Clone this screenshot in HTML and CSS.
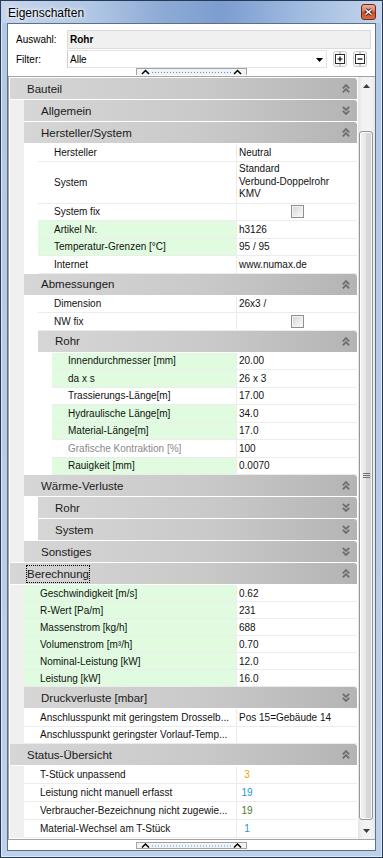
FILE: index.html
```html
<!DOCTYPE html>
<html lang="de">
<head>
<meta charset="utf-8">
<title>Eigenschaften</title>
<link rel="stylesheet" href="styles.css">
</head>
<body>
<div class="window">
  <div class="titlebar">
    <span class="title">Eigenschaften</span>
    <svg class="close" width="15" height="16" viewBox="0 0 15 16">
      <defs>
        <linearGradient id="cg" x1="0" y1="0" x2="0" y2="1">
          <stop offset="0" stop-color="#eeb3a3"/>
          <stop offset="0.45" stop-color="#dc7a60"/>
          <stop offset="0.5" stop-color="#c8462b"/>
          <stop offset="1" stop-color="#d9714d"/>
        </linearGradient>
      </defs>
      <rect x="0.5" y="0.5" width="14" height="15" rx="2.5" fill="url(#cg)" stroke="#6e2b1c"/>
      <path d="M4.5 5.5 L10.5 10.5 M10.5 5.5 L4.5 10.5" stroke="#43201a" stroke-width="3.4"/>
      <path d="M4.5 5.5 L10.5 10.5 M10.5 5.5 L4.5 10.5" stroke="#fff" stroke-width="1.6"/>
    </svg>
  </div>
  <div class="content">
    <div class="form">
      <span class="flabel">Auswahl:</span>
      <div class="fld">Rohr</div>
      <span class="flabel">Filter:</span>
      <div class="filter">
        <div class="combo"><span>Alle</span>
          <svg width="7" height="4" viewBox="0 0 7 4"><path d="M0 0h7L3.5 4z" fill="#000"/></svg>
        </div>
        <svg class="btn" width="14" height="16" viewBox="0 0 14 16">
          <rect x="0.5" y="0.5" width="13" height="15" rx="2" fill="#f6f6f6" stroke="#cdcdcd"/>
          <path d="M7 1v2.5M7 12.5V15" stroke="#8a8a8a"/>
          <rect x="2.5" y="3.5" width="9" height="9" fill="#fff" stroke="#2b2b2b"/>
          <path d="M4.5 8h5M7 5.5v5" stroke="#000" stroke-width="1.2"/>
        </svg>
        <svg class="btn" width="14" height="16" viewBox="0 0 14 16">
          <rect x="0.5" y="0.5" width="13" height="15" rx="2" fill="#f6f6f6" stroke="#cdcdcd"/>
          <path d="M7 1v2.5M7 12.5V15" stroke="#8a8a8a"/>
          <rect x="2.5" y="3.5" width="9" height="9" fill="#fff" stroke="#2b2b2b"/>
          <path d="M4.5 8h5" stroke="#000" stroke-width="1.2"/>
        </svg>
      </div>
    </div>
    <svg class="grip" width="111" height="7" viewBox="0 0 111 7">
      <rect x="0.5" y="0.5" width="110" height="7" fill="#f3f3f3" stroke="#a3a3a3"/>
      <path d="M6 6 L9.5 2.5 L13 6" stroke="#000" stroke-width="1.5" fill="none"/>
      <path d="M98 6 L101.5 2.5 L105 6" stroke="#000" stroke-width="1.5" fill="none"/>
      <line x1="16" y1="4.5" x2="95" y2="4.5" stroke="#3a98ea" stroke-dasharray="1 2"/>
    </svg>

    <div class="pgrid">
      <div class="list">

        <div class="cat">
          <div class="hdr">Bauteil<svg width="8" height="9" viewBox="0 0 8 9"><path d="M0.8 4.3 4 1.1 7.2 4.3M0.8 8.3 4 5.1 7.2 8.3" fill="none" stroke="#6e6e6e" stroke-width="1.8"/></svg></div>
          <div class="kids0">
            <div class="cat">
              <div class="hdr">Allgemein<svg width="8" height="9" viewBox="0 0 8 9"><path d="M0.8 0.8 4 4 7.2 0.8M0.8 4.8 4 8 7.2 4.8" fill="none" stroke="#6e6e6e" stroke-width="1.8"/></svg></div>
            </div>
            <div class="cat">
              <div class="hdr">Hersteller/System<svg width="8" height="9" viewBox="0 0 8 9"><path d="M0.8 4.3 4 1.1 7.2 4.3M0.8 8.3 4 5.1 7.2 8.3" fill="none" stroke="#6e6e6e" stroke-width="1.8"/></svg></div>
              <div class="kids">
                <div class="row"><div class="lab">Hersteller</div><div class="val">Neutral</div></div>
                <div class="row tall"><div class="lab">System</div><div class="val"><span>Standard</span><span>Verbund-Doppelrohr</span><span>KMV</span></div></div>
                <div class="row"><div class="lab">System fix</div><div class="val cbcell"><span class="cb"></span></div></div>
                <div class="row g"><div class="lab">Artikel Nr.</div><div class="val">h3126</div></div>
                <div class="row g"><div class="lab">Temperatur-Grenzen [°C]</div><div class="val">95 / 95</div></div>
                <div class="row"><div class="lab">Internet</div><div class="val">www.numax.de</div></div>
              </div>
            </div>
            <div class="cat">
              <div class="hdr">Abmessungen<svg width="8" height="9" viewBox="0 0 8 9"><path d="M0.8 4.3 4 1.1 7.2 4.3M0.8 8.3 4 5.1 7.2 8.3" fill="none" stroke="#6e6e6e" stroke-width="1.8"/></svg></div>
              <div class="kids">
                <div class="row"><div class="lab">Dimension</div><div class="val">26x3 /</div></div>
                <div class="row"><div class="lab">NW fix</div><div class="val cbcell"><span class="cb"></span></div></div>
                <div class="cat">
                  <div class="hdr">Rohr<svg width="8" height="9" viewBox="0 0 8 9"><path d="M0.8 4.3 4 1.1 7.2 4.3M0.8 8.3 4 5.1 7.2 8.3" fill="none" stroke="#6e6e6e" stroke-width="1.8"/></svg></div>
                  <div class="kids">
                    <div class="row g"><div class="lab">Innendurchmesser [mm]</div><div class="val">20.00</div></div>
                    <div class="row g"><div class="lab">da x s</div><div class="val">26 x 3</div></div>
                    <div class="row"><div class="lab">Trassierungs-Länge[m]</div><div class="val">17.00</div></div>
                    <div class="row g"><div class="lab">Hydraulische Länge[m]</div><div class="val">34.0</div></div>
                    <div class="row g"><div class="lab">Material-Länge[m]</div><div class="val">17.0</div></div>
                    <div class="row dim"><div class="lab">Grafische Kontraktion [%]</div><div class="val">100</div></div>
                    <div class="row g"><div class="lab">Rauigkeit [mm]</div><div class="val">0.0070</div></div>
                  </div>
                </div>
              </div>
            </div>
            <div class="cat">
              <div class="hdr">Wärme-Verluste<svg width="8" height="9" viewBox="0 0 8 9"><path d="M0.8 4.3 4 1.1 7.2 4.3M0.8 8.3 4 5.1 7.2 8.3" fill="none" stroke="#6e6e6e" stroke-width="1.8"/></svg></div>
              <div class="kids">
                <div class="cat">
                  <div class="hdr">Rohr<svg width="8" height="9" viewBox="0 0 8 9"><path d="M0.8 0.8 4 4 7.2 0.8M0.8 4.8 4 8 7.2 4.8" fill="none" stroke="#6e6e6e" stroke-width="1.8"/></svg></div>
                </div>
                <div class="cat">
                  <div class="hdr">System<svg width="8" height="9" viewBox="0 0 8 9"><path d="M0.8 0.8 4 4 7.2 0.8M0.8 4.8 4 8 7.2 4.8" fill="none" stroke="#6e6e6e" stroke-width="1.8"/></svg></div>
                </div>
              </div>
            </div>
            <div class="cat">
              <div class="hdr">Sonstiges<svg width="8" height="9" viewBox="0 0 8 9"><path d="M0.8 0.8 4 4 7.2 0.8M0.8 4.8 4 8 7.2 4.8" fill="none" stroke="#6e6e6e" stroke-width="1.8"/></svg></div>
            </div>
          </div>
        </div>

        <div class="cat">
          <div class="hdr"><span class="focus">Berechnung</span><svg width="8" height="9" viewBox="0 0 8 9"><path d="M0.8 4.3 4 1.1 7.2 4.3M0.8 8.3 4 5.1 7.2 8.3" fill="none" stroke="#6e6e6e" stroke-width="1.8"/></svg></div>
          <div class="kids0">
            <div class="r17">
              <div class="row g"><div class="lab">Geschwindigkeit [m/s]</div><div class="val">0.62</div></div>
              <div class="row g"><div class="lab">R-Wert [Pa/m]</div><div class="val">231</div></div>
              <div class="row g"><div class="lab">Massenstrom [kg/h]</div><div class="val">688</div></div>
              <div class="row g"><div class="lab">Volumenstrom [m³/h]</div><div class="val">0.70</div></div>
              <div class="row g"><div class="lab">Nominal-Leistung [kW]</div><div class="val">12.0</div></div>
              <div class="row g"><div class="lab">Leistung [kW]</div><div class="val">16.0</div></div>
            </div>
            <div class="cat">
              <div class="hdr">Druckverluste [mbar]<svg width="8" height="9" viewBox="0 0 8 9"><path d="M0.8 0.8 4 4 7.2 0.8M0.8 4.8 4 8 7.2 4.8" fill="none" stroke="#6e6e6e" stroke-width="1.8"/></svg></div>
            </div>
            <div class="row"><div class="lab">Anschlusspunkt mit geringstem Drosselb...</div><div class="val">Pos 15=Gebäude 14</div></div>
            <div class="row"><div class="lab">Anschlusspunkt geringster Vorlauf-Temp...</div><div class="val"></div></div>
          </div>
        </div>

        <div class="cat">
          <div class="hdr">Status-Übersicht<svg width="8" height="9" viewBox="0 0 8 9"><path d="M0.8 4.3 4 1.1 7.2 4.3M0.8 8.3 4 5.1 7.2 8.3" fill="none" stroke="#6e6e6e" stroke-width="1.8"/></svg></div>
          <div class="kids0 r18">
            <div class="row"><div class="lab">T-Stück unpassend</div><div class="val"><span class="num orange">3</span></div></div>
            <div class="row"><div class="lab">Leistung nicht manuell erfasst</div><div class="val"><span class="num blue">19</span></div></div>
            <div class="row"><div class="lab">Verbraucher-Bezeichnung nicht zugewie...</div><div class="val"><span class="num green">19</span></div></div>
            <div class="row"><div class="lab">Material-Wechsel am T-Stück</div><div class="val"><span class="num blue">1</span></div></div>
          </div>
        </div>

      </div>
      <div class="sb">
        <div class="sbbtn"><svg width="7" height="4" viewBox="0 0 7 4"><path d="M0 4h7L3.5 0z" fill="#3c3c3c"/></svg></div>
        <div class="thumb">
          <svg width="7" height="5" viewBox="0 0 7 5"><path d="M0 0.5h7M0 2.5h7M0 4.5h7" stroke="#6f6f6f"/></svg>
        </div>
        <div class="sbbtn down"><svg width="7" height="4" viewBox="0 0 7 4"><path d="M0 0h7L3.5 4z" fill="#3c3c3c"/></svg></div>
      </div>
    </div>

    <div class="bottom">
      <svg class="grip" width="111" height="7" viewBox="0 0 111 7">
        <rect x="0.5" y="0.5" width="110" height="6" fill="#f3f3f3" stroke="#a3a3a3"/>
        <path d="M6 5.5 L9.5 2 L13 5.5" stroke="#000" stroke-width="1.5" fill="none"/>
        <path d="M98 5.5 L101.5 2 L105 5.5" stroke="#000" stroke-width="1.5" fill="none"/>
        <line x1="16" y1="4" x2="95" y2="4" stroke="#3a98ea" stroke-dasharray="1 2"/>
      </svg>
    </div>
  </div>
</div>
</body>
</html>
```

FILE: styles.css
```css
* { box-sizing: border-box; }
html, body { margin: 0; padding: 0; }
body {
  width: 383px;
  height: 858px;
  overflow: hidden;
  font-family: "Liberation Sans", Arial, sans-serif;
  background: #fff;
}

.window {
  width: 383px;
  height: 858px;
  border: 1px solid #263957;
  background: linear-gradient(to bottom, #b3c8e5, #bed1ea);
  box-shadow: inset 0 0 0 1px #dfe9f6;
  display: flex;
  flex-direction: column;
}

.titlebar {
  height: 22px;
  flex: none;
  display: flex;
  align-items: center;
  padding: 0 6px 0 7px;
  background: linear-gradient(to right, #c6d6ec 0%, #b4c9e6 22%, #8eabd6 42%, #7c9dcf 58%, #9fbae0 78%, #c4d5ec 100%);
}
.title {
  font-size: 12px;
  color: #000;
  padding-top: 1px;
  text-shadow: 0 0 5px #fff, 0 0 3px #fff;
}
.close { margin-left: auto; display: block; }

.content {
  flex: 1;
  min-height: 0;
  margin: 0 6px 6px;
  border: 1px solid #5e6f87;
  background: #fff;
  display: flex;
  flex-direction: column;
}

.form {
  display: grid;
  grid-template-columns: 51px 1fr;
  row-gap: 1px;
  align-items: center;
  padding: 6px 4px 0 8px;
  font-size: 10px;
  color: #000;
}
.fld {
  height: 19px;
  border: 1px solid #dadada;
  background: #f0f0f0;
  font-weight: bold;
  padding-left: 2px;
  display: flex;
  align-items: center;
}
.filter {
  height: 18px;
  display: flex;
  align-items: center;
}
.combo {
  width: 260px;
  height: 18px;
  border: 1px solid #e2e2e2;
  border-left-color: #d0d0d0;
  background: #fff;
  display: flex;
  align-items: center;
  justify-content: space-between;
  padding: 1px 3px 0 2px;
}
.btn { margin-left: 6px; display: block; }

.grip { display: block; margin: 0 auto; flex: none; }

.pgrid {
  flex: 1;
  min-height: 0;
  margin-top: 1px;
  border-top: 1px solid #a3a3a3;
  border-bottom: 1px solid #a3a3a3;
  border-left: 1px solid #a3a3a3;
  padding-left: 1px;
  display: flex;
}
.list {
  flex: 1;
  min-width: 0;
  overflow: hidden;
  padding-top: 1px;
  margin-right: 1px;
}

.hdr {
  height: 21px;
  margin-bottom: 1px;
  display: flex;
  align-items: center;
  justify-content: space-between;
  padding: 0 7px 0 17px;
  font-size: 11.5px;
  color: #1a1a1a;
  white-space: nowrap;
  background: linear-gradient(to right, #d6d6d6 0%, #c9c9c9 55%, #b4b4b4 100%);
  border-radius: 0 3px 0 0;
}
.hdr svg { flex: none; display: block; }
.focus {
  border: 1px dotted #000;
  padding: 2px 0;
  margin-left: -1px;
}

.kids0 { border-left: 14px solid #f0f0f0; }
.kids { padding-left: 14px; }

.row {
  display: flex;
  height: 17.5px;
  border-bottom: 1px solid #ececec;
  font-size: 10px;
  color: #111;
}
.r17 .row { height: 17px; }
.r18 .row { height: 18px; }
.lab {
  flex: 1;
  min-width: 0;
  padding-left: 16px;
  border-right: 1px solid #ececec;
  display: flex;
  align-items: center;
  white-space: nowrap;
  overflow: hidden;
}
.val {
  width: 120px;
  flex: none;
  padding-left: 2px;
  display: flex;
  align-items: center;
  white-space: nowrap;
  overflow: hidden;
}
.g .lab { background: #e0fbe0; }
.dim .lab { color: #8a8a8a; }
.tall { height: 42px; }
.tall .val {
  flex-direction: column;
  align-items: flex-start;
  justify-content: center;
  line-height: 12.5px;
}
.cbcell { justify-content: center; padding-left: 0; }
.cb {
  display: block;
  width: 13px;
  height: 13px;
  border: 1px solid #8e8f8f;
  background: linear-gradient(135deg, #cfd2d6 0%, #ebebeb 55%, #fbfbfb 100%);
  box-shadow: inset 0 0 0 1px #f4f4f4;
}
.num {
  display: inline-block;
  width: 14px;
  margin-left: 1px;
  text-align: center;
}
.orange { color: #f2a007; }
.blue { color: #2496d6; }
.green { color: #4d7b22; }

.sb {
  width: 17px;
  flex: none;
  display: flex;
  flex-direction: column;
  background: linear-gradient(to right, #e4e4e4, #f2f2f2 25%, #f3f3f3 75%, #e8e8e8);
}
.sbbtn {
  height: 17px;
  flex: none;
  display: flex;
  align-items: center;
  justify-content: center;
}
.sbbtn.down { margin-top: auto; }
.thumb {
  margin: 37px 2px 0 1px;
  height: 689px;
  flex: none;
  border: 1px solid #979797;
  border-radius: 3px;
  background: linear-gradient(to right, #f3f3f3 0%, #e9e9e9 45%, #dadada 50%, #d3d3d3 100%);
  box-shadow: inset 0 0 0 1px rgba(255,255,255,0.75);
  display: flex;
  align-items: center;
  justify-content: center;
}

.bottom {
  flex: none;
  height: 10px;
  padding-top: 2px;
}
```
